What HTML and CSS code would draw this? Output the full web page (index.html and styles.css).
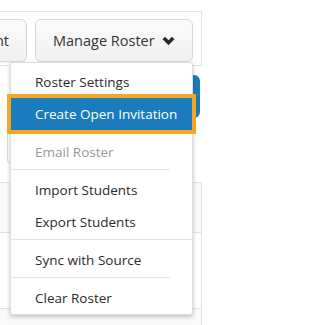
FILE: index.html
```html
<!DOCTYPE html>
<html lang="en">
<head>
<meta charset="utf-8">
<title>Manage Roster</title>
<link rel="stylesheet" href="styles.css">
</head>
<body>
<div class="panel">
  <div class="panel-head">
    <div class="toolbar">
      <button class="btn" type="button">Add Student</button>
      <div class="dropdown">
        <button class="btn btn-toggle" type="button">
          <span>Manage Roster</span>
          <svg class="chev" width="13" height="10" viewBox="0 0 13 10" aria-hidden="true"><path d="M1.8 2 L6.5 6.7 L11.2 2" fill="none" stroke="#2b2b2b" stroke-width="3.6"/></svg>
        </button>
        <ul class="menu">
          <li class="item">Roster Settings</li>
          <li class="item active">Create Open Invitation</li>
          <li class="sep"></li>
          <li class="item disabled">Email Roster</li>
          <li class="sep short"></li>
          <li class="item">Import Students</li>
          <li class="item">Export Students</li>
          <li class="sep"></li>
          <li class="item">Sync with Source</li>
          <li class="sep short"></li>
          <li class="item">Clear Roster</li>
        </ul>
      </div>
    </div>
  </div>
  <div class="section">
    <div class="btn-blue"></div>
    <div class="input"></div>
  </div>
  <div class="table">
    <div class="row shade"></div>
    <div class="row tall"></div>
    <div class="row shade last"></div>
  </div>
</div>
</body>
</html>
```

FILE: styles.css
```css
html, body {
  margin: 0;
  padding: 0;
  background: #fff;
  overflow: hidden;
}
body {
  font-family: "Open Sans", "Noto Sans", sans-serif;
  color: #333;
}
.panel {
  width: 202px;
  padding-top: 11px;
}
.panel-head {
  border-top: 1px solid #e2e2e2;
  border-right: 1px solid #e2e2e2;
  border-bottom: 1px solid #e2e2e2;
  height: 53px;
}
.toolbar {
  display: flex;
  justify-content: flex-end;
  gap: 8px;
  padding: 7px 8px 0 0;
}
.btn {
  flex: none;
  height: 43px;
  box-sizing: border-box;
  border: 1px solid #d9d9d9;
  border-radius: 6px;
  background: linear-gradient(#fbfbfb, #f1f1f1);
  box-shadow: 0 1px 1px rgba(0,0,0,0.06);
  font-family: "Open Sans", "Noto Sans", sans-serif;
  font-size: 14.5px;
  color: #333;
  padding: 0 17px;
  display: flex;
  align-items: center;
  white-space: nowrap;
}
.dropdown {
  position: relative;
  flex: none;
}
.btn-toggle {
  width: 158px;
  padding: 0 17px 0 17px;
  justify-content: space-between;
}
.chev {
  display: block;
  margin-top: 1px;
}
.menu {
  position: absolute;
  top: 100%;
  left: -25px;
  right: 0;
  margin: 0;
  padding: 3px 0 0;
  list-style: none;
  background: #fff;
  border: 1px solid rgba(0,0,0,0.13);
  border-radius: 3px;
  box-shadow: 0 2px 4px rgba(0,0,0,0.22);
  z-index: 10;
}
.item {
  height: 32px;
  display: flex;
  align-items: center;
  padding-left: 24px;
  font-size: 13.5px;
  color: #2b2b2b;
  white-space: nowrap;
}
.item.active {
  background: #1a7bbd;
  color: #fff;
  outline: 4px solid #f5a623;
  position: relative;
  z-index: 2;
}
.item.disabled {
  color: #999;
}
.sep {
  height: 1px;
  background: #e3e3e3;
  margin: 1px 0 4px;
}
.sep.short {
  margin-right: 22px;
}
.section {
  display: flex;
  flex-direction: column;
  padding: 9px 2px 18px 7px;
}
.btn-blue {
  align-self: flex-end;
  width: 120px;
  height: 43px;
  border-radius: 6px;
  background: #1a7bbd;
}
.input {
  margin-top: 6px;
  width: 150px;
  height: 40px;
  box-sizing: border-box;
  border: 1px solid #dcdcdc;
  border-radius: 4px;
}
.table {
  border-top: 1px solid #e2e2e2;
  border-right: 1px solid #e2e2e2;
}
.row {
  height: 49px;
  border-bottom: 1px solid #e2e2e2;
}
.row.tall {
  height: 75px;
}
.row.last {
  height: 16px;
  border-bottom: 0;
}
.row.shade {
  background: #f9f9f9;
}
```
